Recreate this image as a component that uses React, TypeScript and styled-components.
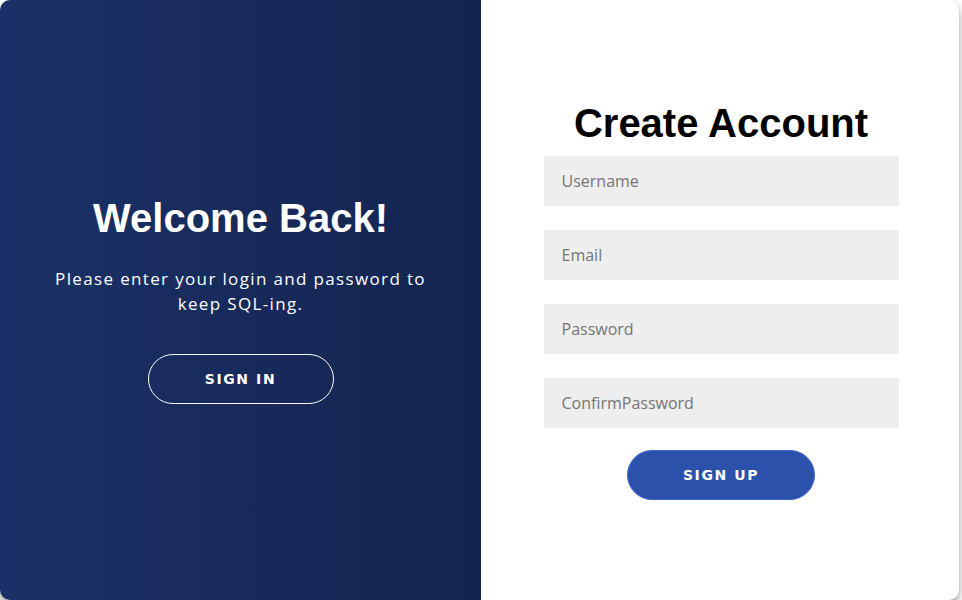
import React from "react";
import styled, { createGlobalStyle } from "styled-components";

const Global = createGlobalStyle`
  html, body { margin: 0; padding: 0; background: #ffffff; }
  #root { width: 962px; height: 600px; }
  * { box-sizing: border-box; }
`;

const Container = styled.div`
  width: 959px;
  height: 600px;
  border-radius: 10px;
  overflow: hidden;
  display: grid;
  grid-template-columns: 481px 1fr;
  background: #ffffff;
  box-shadow: 0 6px 10px rgba(0, 0, 0, 0.25), 0 2px 4px rgba(0, 0, 0, 0.2);
`;

const Overlay = styled.section`
  background: linear-gradient(to right, #1b3167, #13244f);
  color: #ffffff;
  display: flex;
  flex-direction: column;
  align-items: center;
  justify-content: center;
  text-align: center;
  padding: 0 20px 2px;
`;

const FormPanel = styled.section`
  display: flex;
  align-items: center;
  justify-content: center;
  padding-left: 2px;
`;

const Form = styled.form`
  width: 355px;
  display: flex;
  flex-direction: column;
  align-items: center;
`;

const Heading = styled.h1<{ $light?: boolean }>`
  margin: 0;
  font-family: "Liberation Sans", Arial, sans-serif;
  font-weight: bold;
  font-size: 40px;
  line-height: 46px;
  color: ${(p) => (p.$light ? "#ffffff" : "#000000")};
`;

const Text = styled.p`
  margin: 25px 0 38px;
  font-family: "Open Sans", sans-serif;
  font-size: 17px;
  line-height: 25px;
  letter-spacing: 1.35px;
  font-weight: 400;
`;

const Input = styled.input<{ $first?: boolean }>`
  width: 100%;
  height: 50px;
  border: none;
  outline: none;
  background: #eeeeee;
  padding: 0 18px;
  margin-top: ${(p) => (p.$first ? "10px" : "24px")};
  font-family: "Open Sans", sans-serif;
  font-size: 16px;
  color: #333;
  &::placeholder { color: #757575; }
`;

const Button = styled.button<{ $ghost?: boolean }>`
  height: 50px;
  width: ${(p) => (p.$ghost ? "186px" : "188px")};
  border-radius: 25px;
  border: 1px solid ${(p) => (p.$ghost ? "#ffffff" : "#3d63d4")};
  background: ${(p) => (p.$ghost ? "transparent" : "#2c51ab")};
  color: #ffffff;
  font-family: "DejaVu Sans", Verdana, sans-serif;
  font-weight: bold;
  font-size: 14px;
  letter-spacing: 1.6px;
  text-transform: uppercase;
  cursor: pointer;
  margin-top: ${(p) => (p.$ghost ? "0" : "22px")};
`;

export default function App() {
  return (
    <>
      <Global />
      <Container>
        <Overlay>
          <Heading $light>Welcome Back!</Heading>
          <Text>
            Please enter your login and password to
            <br />
            keep SQL-ing.
          </Text>
          <Button $ghost type="button">Sign In</Button>
        </Overlay>
        <FormPanel>
          <Form onSubmit={(e) => e.preventDefault()}>
            <Heading>Create Account</Heading>
            <Input $first placeholder="Username" />
            <Input placeholder="Email" />
            <Input type="password" placeholder="Password" />
            <Input type="password" placeholder="ConfirmPassword" />
            <Button type="submit">Sign Up</Button>
          </Form>
        </FormPanel>
      </Container>
    </>
  );
}
